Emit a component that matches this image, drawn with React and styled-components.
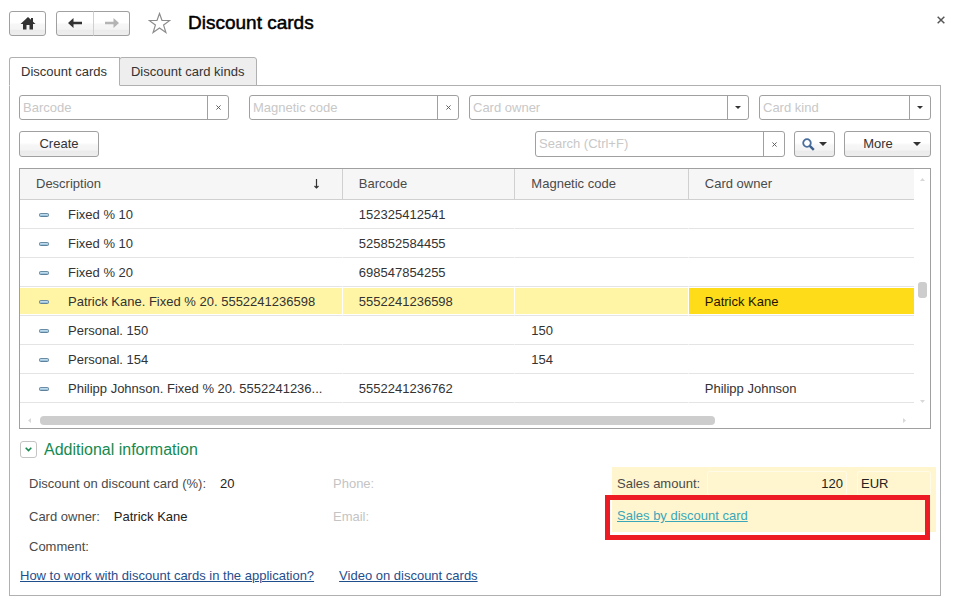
import React from "react";
import styled, { createGlobalStyle, css } from "styled-components";

const line = "#a0a0a0";
const buttonFace = "linear-gradient(#ffffff 0%, #ffffff 45%, #f6f6f6 55%, #f4f4f4 75%, #ebebeb 80%, #eeeeee 100%)";

const GlobalStyle = createGlobalStyle`
  *, *::before, *::after { box-sizing: border-box; }
  body { margin: 0; background: #fff; }
  body, button, input, select {
    font-family: "Liberation Sans", Arial, sans-serif;
    font-size: 13px;
    line-height: 16px;
    color: #333;
  }
  button { padding: 0; cursor: pointer; }
  svg { display: block; flex: none; }
`;

const Page = styled.main`
  padding: 10px 14px 10px 9px;
`;

const TitleBar = styled.header`
  display: flex;
  align-items: center;
  height: 26px;
`;

const Button = styled.button`
  display: flex;
  align-items: center;
  justify-content: center;
  gap: ${(p) => p.$gap || 0}px;
  width: ${(p) => p.$width}px;
  height: 26px;
  border: 1px solid ${line};
  border-radius: 3px;
  background: ${buttonFace};
`;

const TitleButton = styled(Button)`
  height: 25px;
`;

const History = styled.div`
  display: flex;
  margin: 0 18px 0 10px;

  ${TitleButton}:first-child { border-radius: 3px 0 0 3px; }
  ${TitleButton}:last-child {
    border-left-color: #d0d0d0;
    border-radius: 0 3px 3px 0;
    margin-left: -1px;
  }
`;

const PlainButton = styled.button`
  display: flex;
  border: 0;
  background: none;
`;

const Title = styled.h1`
  flex: 1;
  margin: 0 0 0 17px;
  font-size: 19px;
  line-height: 24px;
  font-weight: 400;
  color: #000;
  -webkit-text-stroke: 0.5px #000;
`;

const CloseButton = styled(PlainButton)`
  align-self: flex-start;
  margin: 6px -4px 0 0;
`;

const Tabs = styled.div`
  display: flex;
  height: 29px;
  margin-top: 21px;
`;

const Tab = styled.button`
  height: 29px;
  padding: 0 12px 0 11px;
  border: 1px solid #b0b0b0;
  border-radius: 3px 3px 0 0;
  background: #eee;
  margin-left: -1px;

  ${(p) => p.$active && css`
    z-index: 1;
    margin-left: 0;
    border-bottom-color: #fff;
    border-top-right-radius: 0;
    background: #fff;
  `}
`;

const Panel = styled.section`
  margin-top: -1px;
  border: 1px solid #b0b0b0;
`;

const ListArea = styled.div`
  display: flex;
  flex-direction: column;
  padding: 9px 9px 0;
`;

const Filters = styled.div`
  display: grid;
  grid-template-columns: 230fr 220fr 290fr 172fr;
`;

const FieldBox = styled.div`
  display: flex;
  width: ${(p) => (p.$width ? `${p.$width}px` : "auto")};
  height: ${(p) => p.$height || 25}px;
  margin-right: ${(p) => p.$space || 0}px;
  border: 1px solid ${line};
  border-radius: 3px;
  background: #fff;
`;

const fieldText = css`
  flex: 1;
  min-width: 0;
  padding: 0 3px;
  border: 0;
  outline: 0;
  background: none;
`;

const TextInput = styled.input`
  ${fieldText}
  &::placeholder { color: #c8c8c8; opacity: 1; }
`;

const Select = styled.select`
  ${fieldText}
  appearance: none;
  color: #c8c8c8;
`;

const fieldEnd = css`
  display: flex;
  align-items: center;
  justify-content: center;
  width: 21px;
  border: 0;
  border-left: 1px solid ${line};
  background: none;
`;

const FieldButton = styled.button`
  ${fieldEnd}
`;

const FieldCaret = styled.span`
  ${fieldEnd}
`;

const Commands = styled.div`
  display: flex;
  gap: 9px;
  margin: 11px 0;
`;

const Spacer = styled.div`
  flex: 1;
`;

const MoreText = styled.span`
  padding-left: 9px;
`;

const ListBox = styled.div`
  display: grid;
  grid-template-columns: minmax(0, 1fr) 16px;
  border: 1px solid ${line};
`;

const Table = styled.table`
  width: 100%;
  table-layout: fixed;
  border-collapse: separate;
  border-spacing: 0;
`;

const Col = styled.col`
  width: ${(p) => p.$width};
`;

const HeadCell = styled.th`
  height: 31px;
  padding: 0 20px 0 16px;
  border-bottom: 1px solid #d0d0d0;
  background: #f6f6f6;
  font-weight: 400;
  text-align: left;
  color: #4a4a4a;

  & + & { border-left: 1px solid #d0d0d0; }
`;

const HeadContent = styled.div`
  display: flex;
  align-items: center;
  justify-content: space-between;
`;

const Cell = styled.td`
  height: 29px;
  padding: 2px 16px 0;
  border-bottom: 1px solid #e4e4e4;
  white-space: nowrap;

  &:not(:first-child) { border-left: 1px solid transparent; }
`;

const Row = styled.tr`
  ${(p) => p.$selected && css`
    ${Cell} {
      background: #fff5a5;
      background-clip: padding-box;
      box-shadow: inset 0 1px #fff, inset 0 -1px #fff;
    }
    ${Cell}:last-child {
      background: #ffdc19;
      background-clip: padding-box;
      color: #1c1500;
    }
  `}
`;

const Description = styled.div`
  display: flex;
  align-items: center;
  gap: 19px;
  padding-left: 3px;
`;

const VerticalScroll = styled.div`
  display: flex;
  flex-direction: column;
  align-items: center;
  padding-top: 9px;
`;

const VerticalThumb = styled.div`
  width: 9px;
  height: 16px;
  margin: 101px 0 102px;
  border-radius: 3px;
  background: #cdcdcd;
`;

const HorizontalScroll = styled.div`
  display: flex;
  align-items: center;
  gap: 9px;
  height: 25px;
  padding: 9px 8px 0;
`;

const HorizontalTrack = styled.div`
  flex: 1;
`;

const HorizontalThumb = styled.div`
  width: 79%;
  height: 9px;
  border-radius: 4px;
  background: #cdcdcd;
`;

const GroupHeader = styled.div`
  display: flex;
  align-items: center;
  gap: 7px;
  height: 38px;
  padding: 3px 10px 0;
`;

const GroupToggle = styled.button`
  display: flex;
  align-items: center;
  justify-content: center;
  width: 17px;
  height: 17px;
  border: 1px solid #c4c4c4;
  border-radius: 3px;
  background: #fff;
`;

const GroupTitle = styled.h2`
  margin: 0;
  font-size: 16px;
  line-height: 20px;
  font-weight: 400;
  color: #168a4f;
`;

const Details = styled.div`
  display: grid;
  grid-template-columns: minmax(0, 304fr) minmax(0, 279fr) minmax(0, 324fr);
  padding: 0 4px 0 19px;
`;

const DetailRow = styled.div`
  display: flex;
  align-items: center;
  gap: 14px;
  height: ${(p) => p.$height || 33}px;
`;

const DetailLabel = styled.label`
  white-space: nowrap;
  color: ${(p) => (p.$muted ? "#c4c4c4" : "#4a4a4a")};
`;

const DetailValue = styled.input`
  flex: 1;
  min-width: 0;
  padding: 0;
  border: 0;
  outline: 0;
  background: none;
  color: #222;
`;

const Sales = styled.div`
  position: relative;
  align-self: start;
  padding: 0 5px;
  background: #fff6cf;
`;

const SalesRow = styled.div`
  display: flex;
  align-items: center;
  height: ${(p) => p.$height}px;
`;

const SalesInput = styled(DetailValue)`
  flex: ${(p) => p.$grow} 1 0;
  height: 25px;
  padding: 0 3px;
  border: 1px solid #fffbe8;
  border-radius: 3px;
  text-align: ${(p) => p.$align || "left"};
  margin-left: ${(p) => p.$space || 0}px;
`;

const Frame = styled.div`
  position: absolute;
  top: 28px;
  left: -7px;
  right: 6px;
  height: 45px;
  border: 5px solid #ed1c24;
  pointer-events: none;
`;

const Link = styled.a`
  color: ${(p) => (p.$light ? "#3aa6b9" : "#1f4e8c")};
`;

const HelpLinks = styled.nav`
  display: flex;
  gap: 25px;
  padding: 8px 10px 11px;
`;

const Cross = ({ size = 5 }) => (
  <svg width={size} height={size} viewBox="0 0 6 6" aria-hidden="true">
    <path d="M.5.5l5 5M5.500.5l-5 5" stroke="#555" strokeWidth="1.100" />
  </svg>
);

const Caret = ({ width = 6, height = 3 }) => (
  <svg width={width} height={height} viewBox="0 0 8 4" preserveAspectRatio="none" aria-hidden="true">
    <path d="M0 0h8L4 4z" fill="#333" />
  </svg>
);

const HomeIcon = () => (
  <svg width="16" height="13" viewBox="0 0 16 13" aria-hidden="true">
    <path d="M8 0L.5 7H3v5.500h3.500V8h3v4.500H13V7h2.500L13 4.700V1h-2v1.800z" fill="#333" />
  </svg>
);

const ArrowIcon = ({ forward }) => (
  <svg width="14" height="10" viewBox="0 0 14 10" aria-hidden="true">
    <path
      d={forward ? "M14 5L8.500 0v3.700H0v2.600h8.500V10z" : "M0 5L5.500 0v3.700H14v2.600H5.500V10z"}
      fill={forward ? "#b4b4b4" : "#333"}
    />
  </svg>
);

const StarIcon = () => (
  <svg width="23" height="22" viewBox="0 0 23 22" aria-hidden="true">
    <path
      d="M11.500 1.500l2.500 7h7.800l-6.200 4.600 2.300 7.400-6.400-4.500-6.400 4.500 2.300-7.400L1.200 8.500H9z"
      fill="#fff" stroke="#8c8c8c" strokeWidth="1.200"
    />
  </svg>
);

const SearchIcon = () => (
  <svg width="13" height="13" viewBox="0 0 13 13" aria-hidden="true">
    <circle cx="5" cy="5" r="3.800" fill="#fff" stroke="#4a6f9c" strokeWidth="1.800" />
    <path d="M7.800 7.800l4 4" stroke="#3d5f8c" strokeWidth="2.400" />
  </svg>
);

const SortIcon = () => (
  <svg width="9" height="10" viewBox="0 0 9 10" aria-hidden="true">
    <path d="M3.500 0v9M1.500 7l2 2 2-2" fill="none" stroke="#333" strokeWidth="1.200" />
  </svg>
);

const ItemIcon = () => (
  <svg width="10" height="4" viewBox="0 0 10 4" aria-hidden="true">
    <rect x=".5" y=".5" width="9" height="3" rx="1" fill="#a0c6de" stroke="#5f829c" />
    <path d="M1.500 1.400h7" stroke="#c4deee" />
  </svg>
);

const ScrollTip = ({ d, width, height }) => (
  <svg width={width} height={height} viewBox={`0 0 ${width} ${height}`} aria-hidden="true">
    <path d={d} fill="#d8d8d8" />
  </svg>
);

const ChevronIcon = () => (
  <svg width="7" height="5" viewBox="0 0 7 5" aria-hidden="true">
    <path d="M.7.7l2.800 2.800L6.300.7" fill="none" stroke="#168a4f" strokeWidth="1.600" />
  </svg>
);

const cards = [
  { name: "Fixed % 10", barcode: "152325412541" },
  { name: "Fixed % 10", barcode: "525852584455" },
  { name: "Fixed % 20", barcode: "698547854255" },
  { name: "Patrick Kane. Fixed % 20. 5552241236598", barcode: "5552241236598", owner: "Patrick Kane", selected: true },
  { name: "Personal. 150", magnetic: "150" },
  { name: "Personal. 154", magnetic: "154" },
  { name: "Philipp Johnson. Fixed % 20. 5552241236...", barcode: "5552241236762", owner: "Philipp Johnson" },
];

const ClearableField = ({ label, ...box }) => (
  <FieldBox {...box}>
    <TextInput placeholder={label} aria-label={label} />
    <FieldButton aria-label={`Clear ${label}`}><Cross /></FieldButton>
  </FieldBox>
);

const SelectField = ({ label, ...box }) => (
  <FieldBox {...box}>
    <Select aria-label={label}><option>{label}</option></Select>
    <FieldCaret><Caret /></FieldCaret>
  </FieldBox>
);

const Detail = ({ id, label, value = "", muted, height }) => (
  <DetailRow $height={height}>
    <DetailLabel htmlFor={id} $muted={muted}>{label}</DetailLabel>
    <DetailValue id={id} value={value} readOnly />
  </DetailRow>
);

export default function App() {
  return (
    <Page>
      <GlobalStyle />
      <TitleBar>
        <TitleButton $width={37} aria-label="Home"><HomeIcon /></TitleButton>
        <History>
          <TitleButton $width={38} aria-label="Back"><ArrowIcon /></TitleButton>
          <TitleButton $width={37} aria-label="Forward"><ArrowIcon forward /></TitleButton>
        </History>
        <PlainButton aria-label="Add to favorites"><StarIcon /></PlainButton>
        <Title>Discount cards</Title>
        <CloseButton aria-label="Close"><Cross size={8} /></CloseButton>
      </TitleBar>

      <Tabs role="tablist">
        <Tab role="tab" aria-selected="true" $active>Discount cards</Tab>
        <Tab role="tab" aria-selected="false">Discount card kinds</Tab>
      </Tabs>

      <Panel>
        <ListArea>
          <Filters>
            <ClearableField label="Barcode" $space={20} />
            <ClearableField label="Magnetic code" $space={10} />
            <SelectField label="Card owner" $space={10} />
            <SelectField label="Card kind" />
          </Filters>
          <Commands>
            <Button $width={80}>Create</Button>
            <Spacer />
            <ClearableField label="Search (Ctrl+F)" $width={250} $height={26} />
            <Button $width={41} $gap={4} aria-label="Find"><SearchIcon /><Caret width={8} height={4} /></Button>
            <Button $width={87} $gap={20}><MoreText>More</MoreText><Caret width={8} height={4} /></Button>
          </Commands>
          <ListBox>
            <Table>
              <colgroup>
                <Col $width="36%" />
                <Col $width="19.3%" />
                <Col $width="19.4%" />
                <Col />
              </colgroup>
              <thead>
                <tr>
                  <HeadCell><HeadContent>Description <SortIcon /></HeadContent></HeadCell>
                  <HeadCell>Barcode</HeadCell>
                  <HeadCell>Magnetic code</HeadCell>
                  <HeadCell>Card owner</HeadCell>
                </tr>
              </thead>
              <tbody>
                {cards.map((card, i) => (
                  <Row key={i} $selected={card.selected}>
                    <Cell><Description><ItemIcon />{card.name}</Description></Cell>
                    <Cell>{card.barcode}</Cell>
                    <Cell>{card.magnetic}</Cell>
                    <Cell>{card.owner}</Cell>
                  </Row>
                ))}
              </tbody>
            </Table>
            <VerticalScroll>
              <ScrollTip width={5} height={3} d="M0 3h5L2.500 0z" />
              <VerticalThumb />
              <ScrollTip width={5} height={3} d="M0 0h5L2.500 3z" />
            </VerticalScroll>
            <HorizontalScroll>
              <ScrollTip width={3} height={5} d="M3 0v5L0 2.500z" />
              <HorizontalTrack><HorizontalThumb /></HorizontalTrack>
              <ScrollTip width={3} height={5} d="M0 0v5l3-2.500z" />
            </HorizontalScroll>
          </ListBox>
        </ListArea>

        <GroupHeader>
          <GroupToggle aria-label="Collapse additional information"><ChevronIcon /></GroupToggle>
          <GroupTitle>Additional information</GroupTitle>
        </GroupHeader>
        <Details>
          <div>
            <Detail id="discount" label="Discount on discount card (%):" value="20" />
            <Detail id="owner" label="Card owner:" value="Patrick Kane" />
            <Detail id="comment" label="Comment:" height={27} />
          </div>
          <div>
            <Detail id="phone" label="Phone:" muted />
            <Detail id="email" label="Email:" muted />
          </div>
          <Sales>
            <SalesRow $height={33}>
              <DetailLabel htmlFor="amount">Sales amount:</DetailLabel>
              <SalesInput id="amount" value="120" readOnly $grow={2} $align="right" $space={7} />
              <SalesInput aria-label="Currency" value="EUR" readOnly $grow={1} $space={10} />
            </SalesRow>
            <SalesRow $height={32}>
              <Link href="#sales" $light>Sales by discount card</Link>
            </SalesRow>
            <Frame />
          </Sales>
        </Details>
        <HelpLinks>
          <Link href="#help">How to work with discount cards in the application?</Link>
          <Link href="#video">Video on discount cards</Link>
        </HelpLinks>
      </Panel>
    </Page>
  );
}
